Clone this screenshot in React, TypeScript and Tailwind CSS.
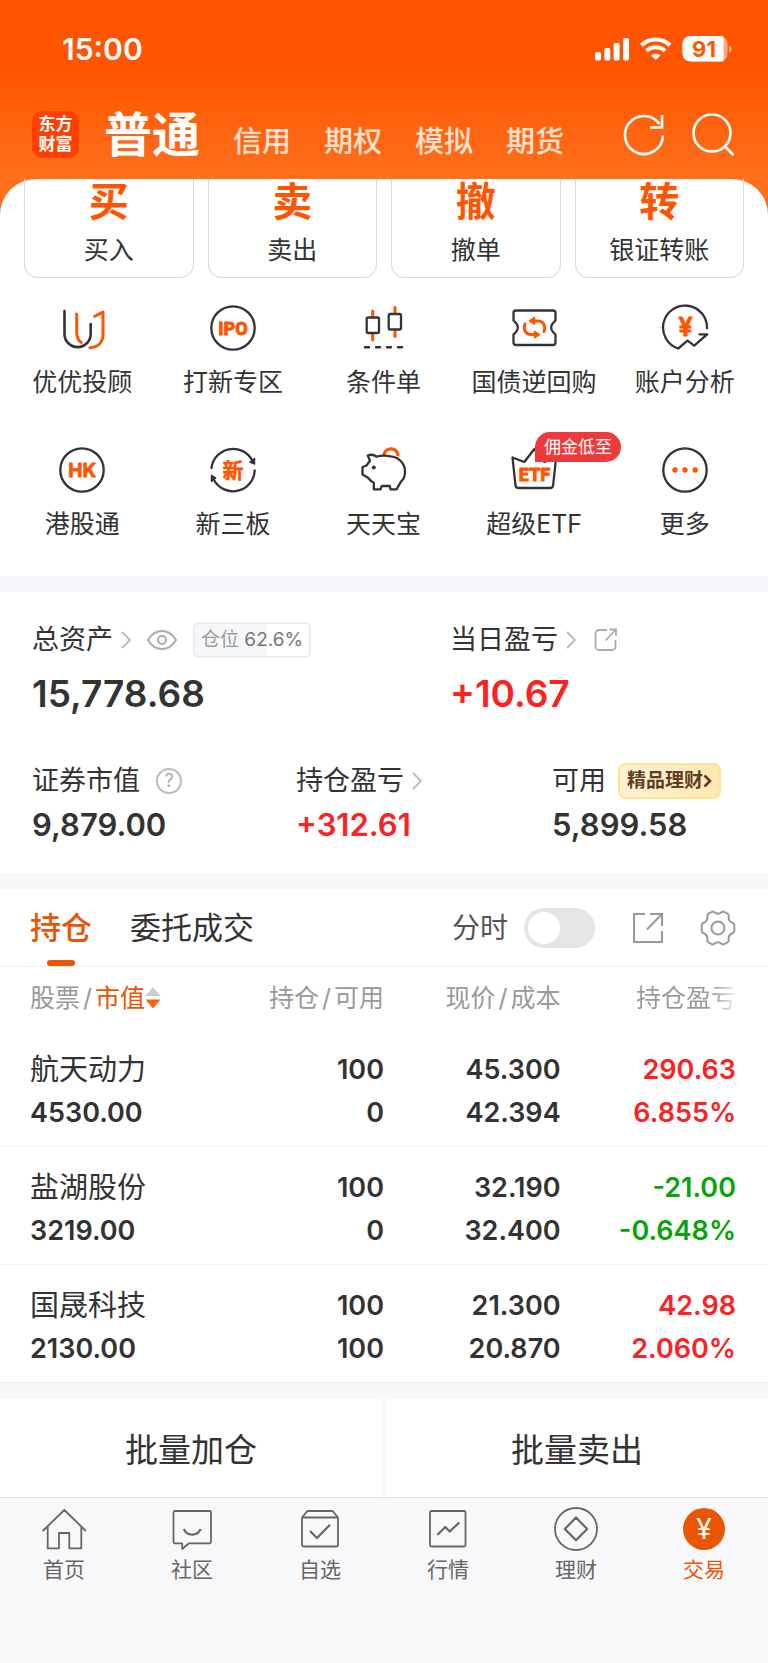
import { useState } from 'react';
import type { ReactNode } from 'react';

interface Shortcut {
  label: string;
  icon: ReactNode;
  badge?: string;
}

interface Holding {
  name: string;
  marketValue: string;
  amount: string;
  available: string;
  price: string;
  cost: string;
  profit: string;
  profitRate: string;
}

const accountTabs = ['信用', '期权', '模拟', '期货'];

const mainActions = [
  { symbol: '买', label: '买入' },
  { symbol: '卖', label: '卖出' },
  { symbol: '撤', label: '撤单' },
  { symbol: '转', label: '银证转账' },
];

const holdings: Holding[] = [
  {
    name: '航天动力',
    marketValue: '4530.00',
    amount: '100',
    available: '0',
    price: '45.300',
    cost: '42.394',
    profit: '290.63',
    profitRate: '6.855%',
  },
  {
    name: '盐湖股份',
    marketValue: '3219.00',
    amount: '100',
    available: '0',
    price: '32.190',
    cost: '32.400',
    profit: '-21.00',
    profitRate: '-0.648%',
  },
  {
    name: '国晟科技',
    marketValue: '2130.00',
    amount: '100',
    available: '100',
    price: '21.300',
    cost: '20.870',
    profit: '42.98',
    profitRate: '2.060%',
  },
];

const ShortcutSvg = ({ children }: { children: ReactNode }) => (
  <svg
    viewBox="0 0 48 48"
    className="size-12"
    fill="none"
    stroke="#333"
    strokeWidth="2.300"
    strokeLinecap="round"
    strokeLinejoin="round"
    aria-hidden="true"
  >
    {children}
  </svg>
);

const shortcuts: Shortcut[] = [
  {
    label: '优优投顾',
    icon: (
      <ShortcutSvg>
        <path d="M6.500 7v23a13 13 0 0 0 26.200 0V20" strokeWidth="2.600" />
        <path d="M18.700 10v18c0 5 1.500 8.500 4.600 10.500M36.700 12.300l8.300-4.300v22c0 8.500-5 13.500-13.200 13.700" stroke="#ff5500" strokeWidth="3" />
      </ShortcutSvg>
    ),
  },
  {
    label: '打新专区',
    icon: (
      <ShortcutSvg>
        <circle cx="24" cy="24" r="21.700" />
        <text x="24" y="30.500" textAnchor="middle" fill="#ff5500" stroke="#ff5500" strokeWidth="1" fontSize="18" className="font-['Roboto'] font-bold">
          IPO
        </text>
      </ShortcutSvg>
    ),
  },
  {
    label: '条件单',
    icon: (
      <ShortcutSvg>
        <path d="M13.700 7v6M13.700 30v6M36 3.500v6M36 26v6.500" stroke="#ff5500" strokeWidth="3" />
        <rect x="7.700" y="13.500" width="12.300" height="15.500" rx="1.500" />
        <rect x="29.700" y="10" width="12.300" height="15.500" rx="1.500" />
        <path d="M6 43.300h38" strokeWidth="2.400" strokeDasharray="4 7" />
      </ShortcutSvg>
    ),
  },
  {
    label: '国债逆回购',
    icon: (
      <ShortcutSvg>
        <path d="M6 6.500h37a2.500 2.500 0 0 1 2.500 2.500v7.500l-2.500 2.500a6.500 6.500 0 0 0 0 9l2.500 2.500V38.500a2.500 2.500 0 0 1-2.500 2.500H6a2.500 2.500 0 0 1-2.500-2.500V30.500L6 28a6.500 6.500 0 0 0 0-9l-2.500-2.500V9A2.500 2.500 0 0 1 6 6.500z" />
        <path d="M15 20c-2 5.500.5 10.500 6 10.500h5M34 27.500c2-5.500-.5-10.500-6-10.500h-5" stroke="#ff5500" strokeWidth="3" />
        <path d="M24.500 13.500v6.500l-5-3.200zM24.500 27.300v6.500l5-3.200z" stroke="#ff5500" fill="#ff5500" strokeWidth="1.500" />
      </ShortcutSvg>
    ),
  },
  {
    label: '账户分析',
    icon: (
      <ShortcutSvg>
        <path d="M46 24.300A22 22 0 1 0 17.200 44.500l9.300-7.800 6.700 5 13-11.400H38.500" />
        <text x="24.500" y="32" textAnchor="middle" fill="#ff5500" stroke="#ff5500" strokeWidth="1" fontSize="25" className="font-['Inter'] font-semibold">
          ¥
        </text>
      </ShortcutSvg>
    ),
  },
  {
    label: '港股通',
    icon: (
      <ShortcutSvg>
        <circle cx="24" cy="24" r="21.700" />
        <text x="24.300" y="31" textAnchor="middle" fill="#ff5500" stroke="#ff5500" strokeWidth="0.800" fontSize="19" className="font-['Inter'] font-bold">
          HK
        </text>
      </ShortcutSvg>
    ),
  },
  {
    label: '新三板',
    icon: (
      <ShortcutSvg>
        <path d="M2.500 22A21.700 21.700 0 0 1 43 14M45.700 24.500A21.700 21.700 0 0 1 5 34" />
        <path d="M45.500 12.500v5.500l-4.500-2zM2.500 35.500v-6l4 2.500z" fill="#333" strokeWidth="1.500" />
        <text x="24" y="31.500" textAnchor="middle" fill="#ff5500" stroke="#ff5500" strokeWidth="0.500" fontSize="21" className="font-['Noto_Sans_CJK_SC'] font-bold">
          新
        </text>
      </ShortcutSvg>
    ),
  },
  {
    label: '天天宝',
    icon: (
      <ShortcutSvg>
        <path d="M25 8.500c1.500-7.500 12.500-7.500 14 .5" stroke="#ff5500" strokeWidth="3.200" />
        <path d="M8.800 9.500c3-1.300 6-1 9 1.200 4-1.400 9-1.200 14.200-.4 8.500 1 14 7.500 14 15.400 0 4-1.200 7.500-4 10l-4.500 7.600h-6l-.7-3.300h-8l-1.300 3.300h-6.700v-6.600c-2.200-.9-4-2.700-5.800-5L3.500 28.500V21l4-1.500c1-1.500 2-3 3.500-4.800z" />
        <circle cx="14.800" cy="21.500" r="1.600" fill="#333" strokeWidth="1" />
      </ShortcutSvg>
    ),
  },
  {
    label: '超级ETF',
    badge: '佣金低至',
    icon: (
      <ShortcutSvg>
        <path d="M2.500 11.500l11.800 4.500 10-13 10 13 11.800-4.500-3 28a3 3 0 0 1-3 2.500H8.500a3 3 0 0 1-3-2.500z" />
        <text x="24.500" y="34.500" textAnchor="middle" fill="#ff5500" stroke="#ff5500" strokeWidth="1" fontSize="18" className="font-['Roboto'] font-bold">
          ETF
        </text>
      </ShortcutSvg>
    ),
  },
  {
    label: '更多',
    icon: (
      <ShortcutSvg>
        <circle cx="24" cy="24" r="21.700" />
        <g fill="#ff5500" stroke="none">
          <circle cx="14" cy="24" r="2.700" />
          <circle cx="24" cy="24" r="2.700" />
          <circle cx="34.200" cy="24" r="2.700" />
        </g>
      </ShortcutSvg>
    ),
  },
];

const NavSvg = ({ children }: { children: ReactNode }) => (
  <svg viewBox="0 0 44 44" className="size-11" fill="none" stroke="#666" strokeWidth="1.800" strokeLinejoin="round" aria-hidden="true">
    {children}
  </svg>
);

const navItems = [
  {
    label: '首页',
    icon: (
      <NavSvg>
        <path d="M.7 24L22.300 3l21.600 21M5.700 19.300v22H17V26h10.300v15.300h12v-22" />
      </NavSvg>
    ),
  },
  {
    label: '社区',
    icon: (
      <NavSvg>
        <path d="M5 4h34.500a1.500 1.500 0 0 1 1.500 1.500v29.300a1.500 1.500 0 0 1-1.500 1.500H19L12.200 42v-5.700H5a1.500 1.500 0 0 1-1.500-1.500V5.500A1.500 1.500 0 0 1 5 4z" />
        <path d="M13.700 22c3.500 7.500 13.500 7.500 17 0" strokeWidth="2.200" />
      </NavSvg>
    ),
  },
  {
    label: '自选',
    icon: (
      <NavSvg>
        <path d="M4 10.500L9 4.500Q9.500 4 10 4h24q.5 0 1 .5l5 6v27a2 2 0 0 1-2 2H6a2 2 0 0 1-2-2zM4 10.500h36" />
        <path d="M12 24l7 7 13-13.300" strokeWidth="2.200" />
      </NavSvg>
    ),
  },
  {
    label: '行情',
    icon: (
      <NavSvg>
        <rect x="4" y="4" width="35.500" height="35.500" rx="1.500" />
        <path d="M11.300 28l8-8 4.400 4.500L33.300 15.500" strokeWidth="2.200" />
      </NavSvg>
    ),
  },
  {
    label: '理财',
    icon: (
      <NavSvg>
        <circle cx="22" cy="22" r="21" />
        <path d="M22 10.500L33.200 22 22 33.300 10.800 22z" strokeWidth="2.200" />
      </NavSvg>
    ),
  },
  {
    label: '交易',
    active: true,
    icon: (
      <NavSvg>
        <circle cx="22" cy="22" r="21" fill="#ea5504" stroke="none" />
        <text x="22" y="32" textAnchor="middle" fill="#fff" stroke="none" fontSize="28" className="font-['Inter']">
          ¥
        </text>
      </NavSvg>
    ),
  },
];

const Chevron = () => (
  <svg viewBox="0 0 12 18" className="ml-[7px] h-[18px] w-3 shrink-0" fill="none" stroke="#bbb" strokeWidth="1.800" aria-hidden="true">
    <path d="M2 1l8 8-8 8" />
  </svg>
);

const StatusBar = () => (
  <div className="flex items-center justify-between pr-[35px] pl-[62px] pt-[29px]">
    <span className="text-[30px] leading-10 font-semibold">15:00</span>
    <svg viewBox="0 0 138 26" className="h-[26px] w-[138px]" fill="#fff" role="img" aria-label="91%">
      <rect x="0" y="16" width="6" height="8.500" rx="1.800" />
      <rect x="9.300" y="12" width="6" height="12.500" rx="1.800" />
      <rect x="18.600" y="7" width="6" height="17.500" rx="1.800" />
      <rect x="28" y="2" width="6" height="22.500" rx="1.800" />
      <g fill="none" stroke="#fff" strokeWidth="4">
        <path d="M46.500 9.300a20.500 20.500 0 0 1 28.500 0" />
        <path d="M51.500 15a13 13 0 0 1 18.500 0" />
      </g>
      <path d="M60.800 24l-4.600-4.600a6.600 6.600 0 0 1 9.200 0z" />
      <rect x="87.500" y="0" width="45" height="25.500" rx="8" fillOpacity="0.500" />
      <path d="M95.500 0H128.500V25.500H95.500A8 8 0 0 1 87.500 17.500V8A8 8 0 0 1 95.500 0z" />
      <path d="M134 9.500c3.600 1 3.600 6 0 7z" fillOpacity="0.500" />
      <text x="109" y="20.500" textAnchor="middle" fill="#ff5500" fontSize="22" className="font-['Inter'] font-bold">
        91
      </text>
    </svg>
  </div>
);

const App = () => {
  const [intraday, setIntraday] = useState(false);

  return (
    <div className="flex min-h-screen flex-col bg-white font-['Inter','Noto_Sans_CJK_SC',sans-serif] text-[#333]">
      <div className="bg-[linear-gradient(#ff5500_70px,#ff701c_180px)]">
        <header className="text-white">
          <StatusBar />
          <div className="mt-[35px] flex h-[60px] items-center pr-[33px] pl-8">
            <div className="flex size-[47px] shrink-0 flex-col items-center justify-center rounded-[10px] bg-[#ff4000] text-[17px] leading-5 font-bold">
              <span>东方</span>
              <span>财富</span>
            </div>
            <nav className="ml-[25px] flex items-baseline gap-[33px] pt-0.5">
              <a href="#normal" className="text-[48px] leading-[60px] font-bold">
                普通
              </a>
              {accountTabs.map((tab) => (
                <a key={tab} href="#account" className="text-[29px] leading-9 font-medium text-white/80">
                  {tab}
                </a>
              ))}
            </nav>
            <div className="ml-auto flex gap-[25px]">
              <button aria-label="刷新">
                <svg viewBox="0 0 44 44" className="size-11" fill="none" stroke="#fff" strokeWidth="2.600">
                  <path d="M41 23.500A19 19 0 1 1 37.500 12M40 3v12.500H28" />
                </svg>
              </button>
              <button aria-label="搜索">
                <svg viewBox="0 0 44 44" className="size-11" fill="none" stroke="#fff" strokeWidth="2.600">
                  <circle cx="21" cy="21" r="18.500" />
                  <path d="M33.500 34l9 9" />
                </svg>
              </button>
            </div>
          </div>
        </header>

        {/* Trade actions, the top of the cards is scrolled under the header */}
        <section className="mt-[15px] rounded-t-[36px] bg-white">
          <div className="grid grid-cols-4 gap-[14px] px-6">
            {mainActions.map((action) => (
              <button key={action.label} className="flex flex-col items-center rounded-b-[14px] border border-t-0 border-[#d9d9d9] pb-3">
                <span className="text-[40px] leading-[46px] font-bold text-[#ff5500]">{action.symbol}</span>
                <span className="mt-2.5 text-[25px] leading-[30px]">{action.label}</span>
              </button>
            ))}
          </div>

          <div className="grid grid-cols-5 gap-y-[49px] pt-[26px] pr-2 pb-[37px] pl-[7px]">
            {shortcuts.map((item) => (
              <button key={item.label} className="flex flex-col items-center">
                <span className="relative">
                  {item.icon}
                  {item.badge && (
                    <span className="absolute -top-[14px] left-[25px] rounded-full rounded-bl-none bg-[#ed3b3d] px-[9px] text-[17px] leading-[30px] whitespace-nowrap text-white">
                      {item.badge}
                    </span>
                  )}
                </span>
                <span className="mt-[15px] text-[25px] leading-[30px] whitespace-nowrap">{item.label}</span>
              </button>
            ))}
          </div>
        </section>
      </div>

      <div className="h-4 bg-[#f6f7fa]" />

      {/* Assets */}
      <section className="px-8 pt-[30px] pb-7 text-[27px] leading-9">
        <div className="flex">
          <div className="w-[418px]">
            <div className="flex items-center">
              <span>总资产</span>
              <Chevron />
              <button aria-label="隐藏资产" className="ml-[14px]">
                <svg viewBox="0 0 32 24" className="h-6 w-8" fill="none" stroke="#aaa" strokeWidth="2">
                  <path d="M2 12C6 5.500 10.500 3 16 3s10 2.500 14 9c-4 6.500-8.500 9-14 9S6 18.500 2 12z" />
                  <circle cx="16" cy="12" r="4" />
                </svg>
              </button>
              <span className="ml-[15px] rounded-md border-2 border-[#ececf0] bg-[linear-gradient(90deg,#f6f7fa_63%,#fff_63%)] px-1.5 text-[19px] leading-8 text-[#777]">
                <span className="text-[#999]">仓位</span> 62.6%
              </span>
            </div>
            <p className="mt-4 text-[37px] leading-10 font-semibold">15,778.68</p>
          </div>
          <div>
            <div className="flex items-center">
              <span>当日盈亏</span>
              <Chevron />
              <button aria-label="分享当日盈亏" className="ml-4">
                <svg viewBox="0 0 26 26" className="size-[26px]" fill="none" stroke="#aaa" strokeWidth="1.800">
                  <path d="M14 3H6a3.500 3.500 0 0 0-3.500 3.500v13A3.500 3.500 0 0 0 6 23h13a3.500 3.500 0 0 0 3.500-3.500V13M16.500 2.500h6.500v6.500M23 2.500L12.500 13.500" />
                </svg>
              </button>
            </div>
            <p className="mt-4 text-[37px] leading-10 font-semibold text-[#fa2222]">+10.67</p>
          </div>
        </div>

        <div className="mt-[49px] flex">
          <div className="w-[264px]">
            <div className="flex items-center">
              <span>证券市值</span>
              <button aria-label="说明" className="ml-4 flex size-[26px] items-center justify-center rounded-full border-2 border-[#bbb] text-[18px] leading-none text-[#aaa]">
                ?
              </button>
            </div>
            <p className="mt-1.5 text-[31px] leading-10 font-semibold">9,879.00</p>
          </div>
          <div className="w-64">
            <div className="flex items-center">
              <span>持仓盈亏</span>
              <Chevron />
            </div>
            <p className="mt-1.5 text-[31px] leading-10 font-semibold text-[#fa2222]">+312.61</p>
          </div>
          <div>
            <div className="flex items-center">
              <span>可用</span>
              <a href="#wealth" className="ml-3 flex items-center rounded-lg border-2 border-[#fde48f] bg-linear-to-r from-[#fff3d6] to-[#ffe7b0] px-[7px] text-[19px] leading-8 font-bold text-[#623d26]">
                精品理财
                <svg viewBox="0 0 9 14" className="h-[14px] w-[9px]" fill="none" stroke="currentColor" strokeWidth="2.600" aria-hidden="true">
                  <path d="M1.500 1.500L7 7l-5.500 5.500" />
                </svg>
              </a>
            </div>
            <p className="mt-1.5 text-[31px] leading-10 font-semibold">5,899.58</p>
          </div>
        </div>
      </section>

      <div className="h-4 bg-[#f6f7fa]" />

      {/* Holdings */}
      <section>
        <div className="flex items-stretch border-b border-[#f0f0f2] pr-8 pl-[30px]">
          <button className="relative text-[31px] leading-[77px] font-medium text-[#ea5504]">
            持仓
            <span className="absolute bottom-0 left-1/2 h-1.5 w-7 -translate-x-1/2 rounded-sm bg-[#ea5504]" />
          </button>
          <button className="ml-[38px] text-[31px] leading-[77px]">委托成交</button>
          <div className="ml-auto flex items-center">
            <label htmlFor="intraday" className="text-[28px] text-[#555]">
              分时
            </label>
            <input
              id="intraday"
              type="checkbox"
              role="switch"
              checked={intraday}
              onChange={(e) => setIntraday(e.target.checked)}
              className="ml-4 h-10 w-[71px] appearance-none rounded-full bg-[#e4e5e7] p-1 before:block before:size-8 before:rounded-full before:bg-white checked:bg-[#ea5504] checked:before:ml-[31px]"
            />
            <button aria-label="分享持仓" className="ml-[37px]">
              <svg viewBox="0 0 32 32" className="size-8" fill="none" stroke="#999" strokeWidth="2">
                <path d="M13 2H2v28h28V19M18 2h12v12M30 2L15 17.500" />
              </svg>
            </button>
            <button aria-label="设置" className="ml-9">
              <svg viewBox="0 0 36 36" className="size-9" fill="none" stroke="#999" strokeWidth="2">
                <path d="M14.500 2.300c2 1.600 5 1.600 7 0 1-.8 2-.9 3-.3l3 1.700c1 .6 1.400 1.500 1.200 2.700-.4 3 1 5.300 3.700 6.300 1.300.5 1.900 1.300 1.900 2.500v5.600c0 1.200-.6 2-1.900 2.500-2.700 1-4.100 3.300-3.700 6.300.2 1.200-.2 2.100-1.200 2.700l-3 1.700c-1 .6-2 .5-3-.3-2-1.600-5-1.600-7 0-1 .8-2 .9-3 .3l-3-1.700c-1-.6-1.400-1.500-1.200-2.700.4-3-1-5.300-3.700-6.300-1.300-.5-1.900-1.300-1.900-2.500v-5.600c0-1.200.6-2 1.900-2.500 2.700-1 4.100-3.300 3.700-6.300-.2-1.200.2-2.100 1.200-2.700l3-1.700c1-.6 2-.5 3 .3z" />
                <circle cx="18" cy="18" r="6.500" />
              </svg>
            </button>
          </div>
        </div>

        <table className="w-full table-fixed text-right">
          <thead className="text-[25px] leading-[30px] text-[#999]">
            <tr>
              <th className="w-[30%] py-4 pl-[30px] text-left font-normal whitespace-nowrap">
                <button className="flex items-center">
                  股票<span className="mx-[3px]">/</span>
                  <span className="text-[#ea5504]">市值</span>
                  <svg viewBox="0 0 16 22" className="h-[22px] w-4" aria-hidden="true">
                    <path d="M8 0l7.500 9H.5z" fill="#ccc" />
                    <path d="M8 21.500L.5 12.500h15z" fill="#ff6010" />
                  </svg>
                </button>
              </th>
              <th className="w-[20%] py-4 font-normal whitespace-nowrap">
                持仓<span className="mx-[3px]">/</span>可用
              </th>
              <th className="w-[23%] py-4 font-normal whitespace-nowrap">
                现价<span className="mx-[3px]">/</span>成本
              </th>
              <th className="w-[27%] py-4 pr-8 font-normal whitespace-nowrap">
                <span className="bg-linear-to-r from-[#999] from-75% to-[#eee] bg-clip-text text-transparent">持仓盈亏</span>
              </th>
            </tr>
          </thead>
          <tbody className="text-[27px] leading-[43px] font-semibold">
            {holdings.map((item) => (
              <tr key={item.name} className="border-b border-[#f0f0f2]">
                <td className="pt-[19px] pb-3 pl-[30px] text-left">
                  <p className="text-[29px] font-normal">{item.name}</p>
                  <p>{item.marketValue}</p>
                </td>
                <td className="pt-[19px] pb-3">
                  <p>{item.amount}</p>
                  <p>{item.available}</p>
                </td>
                <td className="pt-[19px] pb-3">
                  <p>{item.price}</p>
                  <p>{item.cost}</p>
                </td>
                <td className={item.profit.startsWith('-') ? 'pt-[19px] pr-8 pb-3 text-[#09a30b]' : 'pt-[19px] pr-8 pb-3 text-[#fa2222]'}>
                  <p>{item.profit}</p>
                  <p>{item.profitRate}</p>
                </td>
              </tr>
            ))}
          </tbody>
        </table>
      </section>

      {/* Batch actions */}
      <div className="grid grid-cols-2 gap-1 bg-[#f6f7fa] pt-4 text-[33px] leading-[94px]">
        <button className="bg-white pt-1">批量加仓</button>
        <button className="bg-white pt-1">批量卖出</button>
      </div>

      <nav className="grid grow grid-cols-6 items-start border-t border-[#dcdfe3] bg-[#f8f8fb] pt-[9px] pb-16">
        {navItems.map((item) => (
          <a
            key={item.label}
            href="#nav"
            className={item.active ? 'flex flex-col items-center text-[#ea5504]' : 'flex flex-col items-center text-[#666]'}
          >
            {item.icon}
            <span className="mt-[5px] text-[21px] leading-7">{item.label}</span>
          </a>
        ))}
      </nav>
    </div>
  );
};

export default App;
